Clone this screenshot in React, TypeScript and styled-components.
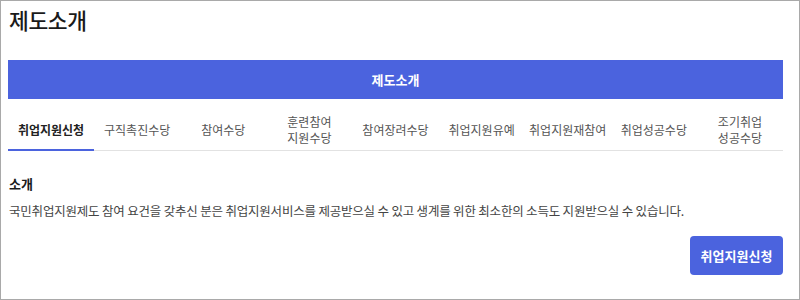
import React, { useState } from "react";
import styled, { createGlobalStyle } from "styled-components";

const GlobalStyle = createGlobalStyle`
  html, body {
    margin: 0;
    padding: 0;
    background: #fff;
  }
  body {
    font-family: "Noto Sans CJK KR", "Noto Sans", sans-serif;
    color: #222;
  }
`;

const tabs = [
  "취업지원신청",
  "구직촉진수당",
  "참여수당",
  "훈련참여\n지원수당",
  "참여장려수당",
  "취업지원유예",
  "취업지원재참여",
  "취업성공수당",
  "조기취업\n성공수당",
];

function App() {
  const [active, setActive] = useState(0);

  return (
    <Frame>
      <GlobalStyle />
      <Title>제도소개</Title>
      <Banner>제도소개</Banner>
      <TabList>
        {tabs.map((t, i) => (
          <Tab key={t} $active={i === active} onClick={() => setActive(i)}>
            {t.split("\n").map((line) => (
              <TabLine key={line}>{line}</TabLine>
            ))}
          </Tab>
        ))}
      </TabList>
      <Section>
        <SectionTitle>소개</SectionTitle>
        <Body>
          국민취업지원제도 참여 요건을 갖추신 분은 취업지원서비스를 제공받으실 수
          있고 생계를 위한 최소한의 소득도 지원받으실 수 있습니다.
        </Body>
      </Section>
      <Actions>
        <ApplyButton>취업지원신청</ApplyButton>
      </Actions>
    </Frame>
  );
}

export default App;

const Frame = styled.div`
  box-sizing: border-box;
  width: 800px;
  height: 300px;
  border: 1px solid #a9a9a9;
  padding: 0 16px 0 7px;
  display: flex;
  flex-direction: column;
  overflow: hidden;
`;

const Title = styled.h1`
  margin: 3px 0 0 1px;
  height: 56px;
  font-size: 21.5px;
  font-weight: 500;
  letter-spacing: -0.4px;
  color: #1a1a1a;
  line-height: 32px;
`;

const Banner = styled.div`
  height: 39px;
  background: #4b63de;
  color: #fff;
  font-size: 13px;
  font-weight: 700;
  display: flex;
  align-items: center;
  justify-content: center;
`;

const TabList = styled.div`
  margin-top: 11px;
  display: grid;
  grid-template-columns: repeat(9, 1fr);
  border-bottom: 1px solid #e2e2e2;
`;

const Tab = styled.button<{ $active: boolean }>`
  height: 41px;
  border: 0;
  background: none;
  padding: 0;
  margin-bottom: -1px;
  border-bottom: 2px solid ${(p) => (p.$active ? "#4b63de" : "transparent")};
  font-family: inherit;
  font-size: 12px;
  font-weight: ${(p) => (p.$active ? 700 : 400)};
  color: ${(p) => (p.$active ? "#222" : "#555")};
  display: flex;
  flex-direction: column;
  align-items: center;
  justify-content: center;
  cursor: pointer;
`;

const TabLine = styled.span`
  display: block;
  line-height: 16px;
`;

const Section = styled.div`
  margin-top: 24px;
  padding-left: 1px;
`;

const SectionTitle = styled.h2`
  margin: 0;
  font-size: 13px;
  font-weight: 700;
  color: #1a1a1a;
  line-height: 18px;
`;

const Body = styled.p`
  margin: 9px 0 0;
  font-size: 12.5px;
  color: #444;
  line-height: 18px;
  letter-spacing: -0.2px;
`;

const Actions = styled.div`
  display: flex;
  justify-content: flex-end;
  margin-top: 16px;
`;

const ApplyButton = styled.button`
  width: 93px;
  height: 39px;
  border: 0;
  border-radius: 4px;
  background: #4b63de;
  color: #fff;
  font-family: inherit;
  font-size: 13px;
  font-weight: 700;
  cursor: pointer;
`;
